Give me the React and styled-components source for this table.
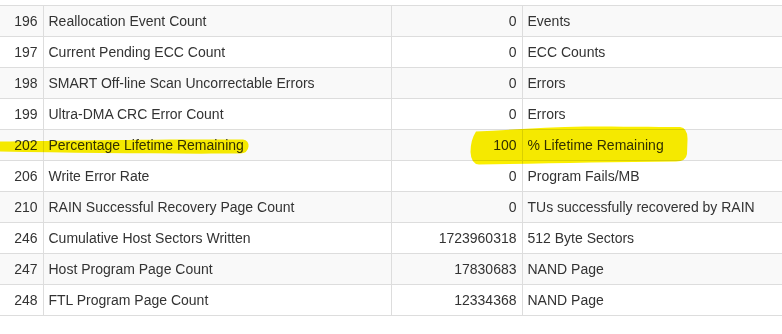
import React from 'react';
import styled, { createGlobalStyle } from 'styled-components';

const GlobalStyle = createGlobalStyle`
  html, body {
    margin: 0;
    padding: 0;
    background: #fff;
  }
  body {
    font-family: "Liberation Sans", Arial, sans-serif;
    font-size: 14px;
    color: #333;
  }
`;

const Wrapper = styled.div`
  position: relative;
  width: 782px;
  height: 334px;
  padding-top: 5px;
  box-sizing: border-box;
  overflow: hidden;
`;

const Table = styled.table`
  width: 100%;
  border-collapse: collapse;
  table-layout: fixed;
`;

const Row = styled.tr`
  background: ${props => (props.$striped ? '#f9f9f9' : '#fff')};
`;

const Cell = styled.td`
  height: 30px;
  padding: 0 5px;
  border-top: 1px solid #ddd;
  border-bottom: 1px solid #ddd;
  border-left: ${props => (props.$first ? 'none' : '1px solid #ddd')};
  text-align: ${props => (props.$right ? 'right' : 'left')};
  vertical-align: middle;
  white-space: nowrap;
  overflow: hidden;
  line-height: 20px;
`;

const Marker = styled.svg`
  position: absolute;
  left: 0;
  top: 0;
  pointer-events: none;
  mix-blend-mode: multiply;
`;

const rows = [
  ['196', 'Reallocation Event Count', '0', 'Events'],
  ['197', 'Current Pending ECC Count', '0', 'ECC Counts'],
  ['198', 'SMART Off-line Scan Uncorrectable Errors', '0', 'Errors'],
  ['199', 'Ultra-DMA CRC Error Count', '0', 'Errors'],
  ['202', 'Percentage Lifetime Remaining', '100', '% Lifetime Remaining'],
  ['206', 'Write Error Rate', '0', 'Program Fails/MB'],
  ['210', 'RAIN Successful Recovery Page Count', '0', 'TUs successfully recovered by RAIN'],
  ['246', 'Cumulative Host Sectors Written', '1723960318', '512 Byte Sectors'],
  ['247', 'Host Program Page Count', '17830683', 'NAND Page'],
  ['248', 'FTL Program Page Count', '12334368', 'NAND Page'],
];

export default function App() {
  return (
    <Wrapper>
      <GlobalStyle />
      <Table>
        <colgroup>
          <col style={{ width: 43 }} />
          <col style={{ width: 348 }} />
          <col style={{ width: 131 }} />
          <col />
        </colgroup>
        <tbody>
          {rows.map(([id, name, value, unit], i) => (
            <Row key={id} $striped={i % 2 === 0}>
              <Cell $first $right>{id}</Cell>
              <Cell>{name}</Cell>
              <Cell $right>{value}</Cell>
              <Cell>{unit}</Cell>
            </Row>
          ))}
        </tbody>
      </Table>

      {/* highlighter strokes drawn over the table */}
      <Marker width="782" height="334" viewBox="0 0 782 334">
        <path
          fill="#fbef00"
          d="M0,141.5 C60,140.5 170,139 243,139.5 Q249,140.5 248.5,146.5 Q248,153 240,153.5 C170,154 80,153 0,151.5 Z"
        />
        <path
          fill="#fbef00"
          d="M476,131.5 C510,130 545,127 585,126.5 C620,126.5 655,127 680,127 Q688,128 687.5,140 L687,154 Q686,161.5 676,161.5 C610,162 540,163.5 479,164.5 Q471,164 470.5,152 Q470.5,140 476,131.5 Z"
        />
      </Marker>
    </Wrapper>
  );
}
